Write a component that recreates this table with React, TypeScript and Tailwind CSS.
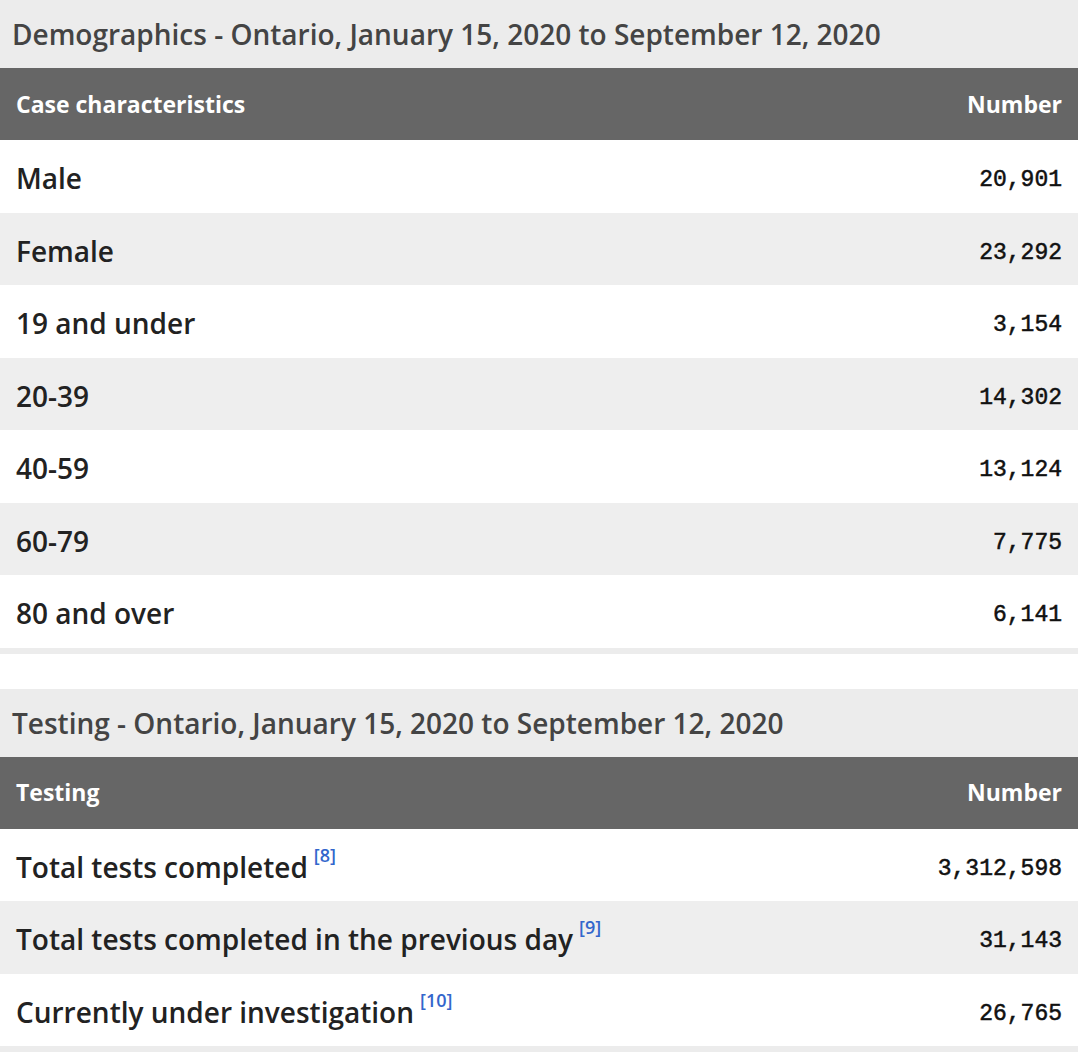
const DEMOGRAPHICS = [
  { label: 'Male', value: '20,901' },
  { label: 'Female', value: '23,292' },
  { label: '19 and under', value: '3,154' },
  { label: '20-39', value: '14,302' },
  { label: '40-59', value: '13,124' },
  { label: '60-79', value: '7,775' },
  { label: '80 and over', value: '6,141' },
];

const TESTING = [
  { label: 'Total tests completed', ref: '8', value: '3,312,598' },
  { label: 'Total tests completed in the previous day', ref: '9', value: '31,143' },
  { label: 'Currently under investigation', ref: '10', value: '26,765' },
];

interface Row {
  label: string;
  value: string;
  ref?: string;
}

function DataTable({ title, heading, rows }: { title: string; heading: string; rows: Row[] }) {
  return (
    <div>
      <div className="h-[68px] bg-[#ececec] flex items-center px-3">
        <h2 className="text-[28px] font-semibold text-[#444]">{title}</h2>
      </div>
      <div className="h-[72px] bg-[#666] flex items-center justify-between px-4">
        <span className="text-[23px] font-bold text-white">{heading}</span>
        <span className="text-[23px] font-bold text-white">Number</span>
      </div>
      {rows.map((row, i) => (
        <div
          key={row.label}
          className={`h-[72.5px] flex items-center justify-between px-4 ${i % 2 === 0 ? 'bg-white' : 'bg-[#eeeeee]'}`}
        >
          <span className="mt-[4px] flex items-start text-[28px] leading-[36px] font-semibold text-[#222]">
            {row.label}
            {row.ref && (
              <span className="ml-[6px] mt-[-6px] text-[18px] leading-[24px] font-semibold text-[#3366cc]">[{row.ref}]</span>
            )}
          </span>
          <span className="mt-[8px] text-[23px] text-[#111] font-['Liberation_Mono',monospace] [-webkit-text-stroke:0.5px_#111]">{row.value}</span>
        </div>
      ))}
      <div className="h-[6px] bg-[#ececec]" />
    </div>
  );
}

export default function App() {
  return (
    <div className="w-[1078px] bg-white font-['Open_Sans',sans-serif]">
      <DataTable title="Demographics - Ontario, January 15, 2020 to September 12, 2020" heading="Case characteristics" rows={DEMOGRAPHICS} />
      <div className="h-[35px]" />
      <DataTable title="Testing - Ontario, January 15, 2020 to September 12, 2020" heading="Testing" rows={TESTING} />
    </div>
  );
}
